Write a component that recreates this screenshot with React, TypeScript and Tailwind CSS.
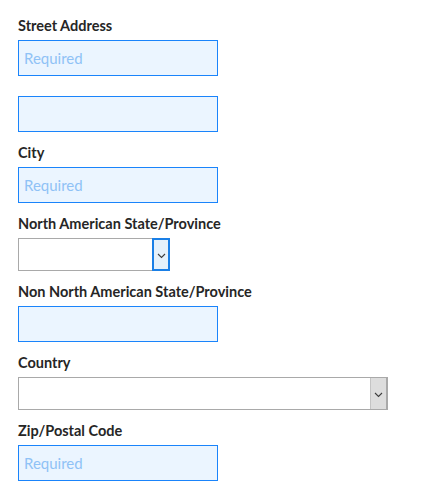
import React from "react";

const font = { fontFamily: "Lato, 'Noto Sans', sans-serif" };

function Label({ children }: { children: React.ReactNode }) {
  return (
    <div className="h-[20px] leading-[20px] text-[14.5px] font-bold text-[#262626] whitespace-nowrap">
      {children}
    </div>
  );
}

function TextInput({ placeholder }: { placeholder?: string }) {
  return (
    <input
      className="mt-[4px] block w-[200px] h-[36px] border border-[#1a84fb] bg-[#ebf5ff] px-[5px] text-[15px] text-[#333] placeholder:text-[#8fc2f6] outline-none"
      placeholder={placeholder}
      style={font}
    />
  );
}

function Chevron() {
  return (
    <svg width="9" height="6" viewBox="0 0 9 6" fill="none">
      <path d="M1 1 L4.5 4.5 L8 1" stroke="#3d3d3d" strokeWidth="1.1" />
    </svg>
  );
}

function NASelect() {
  return (
    <div className="mt-[4px] flex w-[152px] h-[33px] border border-[#a9a9a9] bg-white">
      <div className="flex-1" />
      <div className="w-[18px] -my-px -mr-px border-2 border-[#1a7fe6] bg-[#e5f1fb] flex items-center justify-center pt-[2px]">
        <Chevron />
      </div>
    </div>
  );
}

function CountrySelect() {
  return (
    <div className="mt-[4px] flex w-[370px] h-[33px] border border-[#a9a9a9] bg-white">
      <div className="flex-1" />
      <div className="w-[17px] border-l border-[#c4c4c4] border-r border-r-[#a9a9a9] bg-[#dddddd] flex items-center justify-center pt-[2px]">
        <Chevron />
      </div>
    </div>
  );
}

export default function App() {
  return (
    <div className="w-[438px] h-[500px] bg-white px-[18px] pt-[16px]" style={font}>
      <Label>Street Address</Label>
      <TextInput placeholder="Required" />
      <div className="h-[20px]" />
      <input
        className="block w-[200px] h-[36px] border border-[#1a84fb] bg-[#ebf5ff] px-[5px] text-[15px] outline-none"
        style={font}
      />
      <div className="mt-[11px]">
        <Label>City</Label>
        <TextInput placeholder="Required" />
      </div>
      <div className="mt-[11px]">
        <Label>North American State/Province</Label>
        <NASelect />
      </div>
      <div className="mt-[11px]">
        <Label>Non North American State/Province</Label>
        <TextInput />
      </div>
      <div className="mt-[11px]">
        <Label>Country</Label>
        <CountrySelect />
      </div>
      <div className="mt-[11px]">
        <Label>Zip/Postal Code</Label>
        <TextInput placeholder="Required" />
      </div>
    </div>
  );
}
